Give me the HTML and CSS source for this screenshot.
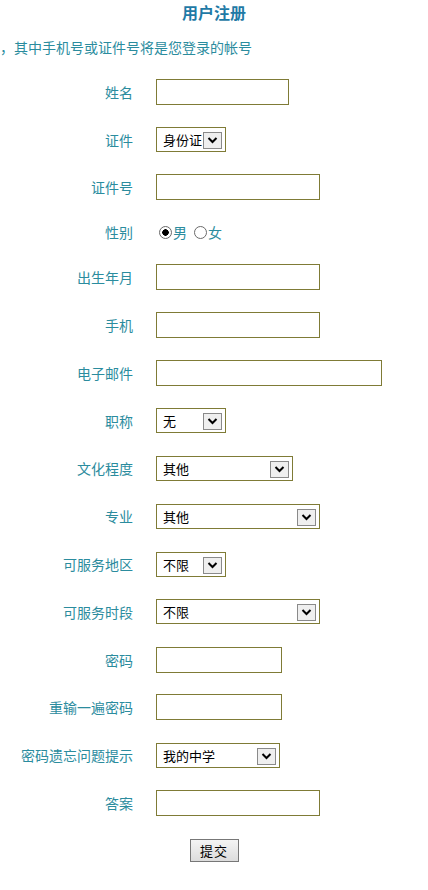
FILE: index.html
```html
<!DOCTYPE html>
<html>
<head>
    <meta charset="utf-8" />
    <title>用户注册</title>
    <link rel="stylesheet" href="styles.css">
</head>
<body>
<h1 class="title">用户注册</h1>
<p class="note">，其中手机号或证件号将是您登录的帐号</p>

<form class="reg" name="reg">
    <div class="row">
        <label class="lbl" for="name">姓名</label>
        <div class="fld"><input type="text" id="name" class="txt w133" /></div>
    </div>
    <div class="row">
        <label class="lbl" for="idtype">证件</label>
        <div class="fld"><span class="pick w70">
            <select id="idtype"><option>身份证</option><option>护照</option></select>
            <span class="arrow"><svg width="17" height="15" viewBox="0 0 17 15"><path d="M4.5 5 L8.5 9 L12.5 5" fill="none" stroke="#000" stroke-width="2"/></svg></span>
        </span></div>
    </div>
    <div class="row">
        <label class="lbl" for="idno">证件号</label>
        <div class="fld"><input type="text" id="idno" class="txt w164" /></div>
    </div>
    <div class="row short">
        <span class="lbl">性别</span>
        <div class="fld sex">
            <input type="radio" name="sex" id="male" checked="checked" /><label for="male">男</label>
            <input type="radio" name="sex" id="female" /><label for="female">女</label>
        </div>
    </div>
    <div class="row">
        <label class="lbl" for="birth">出生年月</label>
        <div class="fld"><input type="text" id="birth" class="txt w164" /></div>
    </div>
    <div class="row">
        <label class="lbl" for="mobile">手机</label>
        <div class="fld"><input type="text" id="mobile" class="txt w164" /></div>
    </div>
    <div class="row">
        <label class="lbl" for="email">电子邮件</label>
        <div class="fld"><input type="text" id="email" class="txt w226" /></div>
    </div>
    <div class="row">
        <label class="lbl" for="title">职称</label>
        <div class="fld"><span class="pick w70">
            <select id="title"><option>无</option><option>初级</option><option>中级</option><option>高级</option></select>
            <span class="arrow"><svg width="17" height="15" viewBox="0 0 17 15"><path d="M4.5 5 L8.5 9 L12.5 5" fill="none" stroke="#000" stroke-width="2"/></svg></span>
        </span></div>
    </div>
    <div class="row">
        <label class="lbl" for="edu">文化程度</label>
        <div class="fld"><span class="pick w137">
            <select id="edu"><option>其他</option><option>本科</option><option>硕士</option></select>
            <span class="arrow"><svg width="17" height="15" viewBox="0 0 17 15"><path d="M4.5 5 L8.5 9 L12.5 5" fill="none" stroke="#000" stroke-width="2"/></svg></span>
        </span></div>
    </div>
    <div class="row">
        <label class="lbl" for="major">专业</label>
        <div class="fld"><span class="pick w164">
            <select id="major"><option>其他</option></select>
            <span class="arrow"><svg width="17" height="15" viewBox="0 0 17 15"><path d="M4.5 5 L8.5 9 L12.5 5" fill="none" stroke="#000" stroke-width="2"/></svg></span>
        </span></div>
    </div>
    <div class="row">
        <label class="lbl" for="area">可服务地区</label>
        <div class="fld"><span class="pick w70">
            <select id="area"><option>不限</option></select>
            <span class="arrow"><svg width="17" height="15" viewBox="0 0 17 15"><path d="M4.5 5 L8.5 9 L12.5 5" fill="none" stroke="#000" stroke-width="2"/></svg></span>
        </span></div>
    </div>
    <div class="row">
        <label class="lbl" for="hours">可服务时段</label>
        <div class="fld"><span class="pick w164">
            <select id="hours"><option>不限</option></select>
            <span class="arrow"><svg width="17" height="15" viewBox="0 0 17 15"><path d="M4.5 5 L8.5 9 L12.5 5" fill="none" stroke="#000" stroke-width="2"/></svg></span>
        </span></div>
    </div>
    <div class="row">
        <label class="lbl" for="pwd">密码</label>
        <div class="fld"><input type="password" id="pwd" class="txt w126" /></div>
    </div>
    <div class="row">
        <label class="lbl" for="pwd2">重输一遍密码</label>
        <div class="fld"><input type="password" id="pwd2" class="txt w126" /></div>
    </div>
    <div class="row">
        <label class="lbl" for="question">密码遗忘问题提示</label>
        <div class="fld"><span class="pick w124">
            <select id="question"><option>我的中学</option></select>
            <span class="arrow"><svg width="17" height="15" viewBox="0 0 17 15"><path d="M4.5 5 L8.5 9 L12.5 5" fill="none" stroke="#000" stroke-width="2"/></svg></span>
        </span></div>
    </div>
    <div class="row">
        <label class="lbl" for="answer">答案</label>
        <div class="fld"><input type="text" id="answer" class="txt w164" /></div>
    </div>
    <div class="submit">
        <button type="submit" class="btn">提交</button>
    </div>
</form>
</body>
</html>
```

FILE: styles.css
```css
body {
    margin: 0;
    background: #fff;
    font-family: "Noto Sans CJK SC", "DejaVu Sans", sans-serif;
    font-size: 14px;
    color: #2b8c9e;
}
.title {
    margin: 0;
    padding-top: 2px;
    font-size: 16px;
    line-height: 20px;
    font-weight: bold;
    text-align: center;
    color: #1f7aa6;
}
.note {
    margin: 15px 0 11px;
    line-height: 20px;
}
.row {
    display: grid;
    grid-template-columns: 133px 1fr;
    column-gap: 23px;
    align-items: center;
    height: 47.8px;
}
.row.short {
    height: 42px;
}
.lbl {
    text-align: right;
    line-height: 20px;
}
.fld {
    display: flex;
    align-items: center;
}
.txt {
    box-sizing: border-box;
    height: 26px;
    border: 1px solid #7f7b36;
    background: #fff;
    padding: 0 4px;
    margin: 0;
    font: 13px "Noto Sans CJK SC", sans-serif;
    outline: none;
}
.pick {
    box-sizing: border-box;
    display: inline-flex;
    align-items: center;
    height: 25px;
    border: 1px solid #7f7b36;
    background: #fff;
    padding: 0 3px 0 0;
}
.pick select {
    -webkit-appearance: none;
    appearance: none;
    flex: 1;
    min-width: 0;
    border: 0;
    background: transparent;
    padding: 0 0 0 6px;
    margin: 0;
    font: 13px "Noto Sans CJK SC", sans-serif;
    color: #000;
    outline: none;
}
.arrow {
    box-sizing: border-box;
    display: flex;
    align-self: flex-end;
    margin-bottom: 2px;
    width: 19px;
    height: 17px;
    border: 1px solid #8a8a8a;
    background: #efefef;
}
.w70 { width: 70px; }
.w124 { width: 124px; }
.w126 { width: 126px; }
.w133 { width: 133px; }
.w137 { width: 137px; }
.w164 { width: 164px; }
.w226 { width: 226px; }

.sex input {
    -webkit-appearance: none;
    appearance: none;
    box-sizing: border-box;
    width: 13px;
    height: 13px;
    margin: 0 1px 0 3px;
    border: 1px solid #6a6a6a;
    border-radius: 50%;
    background: #fff;
}
.sex input:checked {
    background: radial-gradient(circle, #000 0 3px, #fff 3.5px);
}
.sex label {
    margin-right: 4px;
    line-height: 20px;
}
.submit {
    padding-top: 12px;
    text-align: center;
}
.btn {
    box-sizing: border-box;
    width: 49px;
    height: 23px;
    padding: 0;
    border: 1px solid #777;
    background: linear-gradient(#f4f4f4, #dcdcdc);
    font: 13px "Noto Sans CJK SC", sans-serif;
    letter-spacing: 1px;
    color: #000;
}
```
